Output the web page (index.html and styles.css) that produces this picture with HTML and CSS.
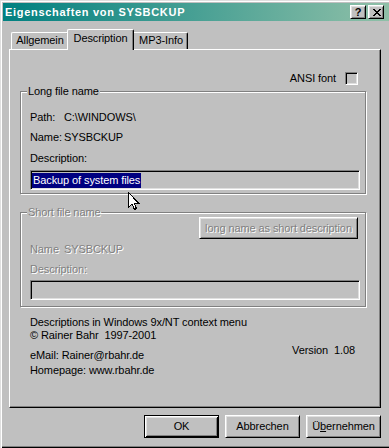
FILE: index.html
```html
<!DOCTYPE html>
<html>
<head>
<meta charset="utf-8">
<link rel="stylesheet" href="styles.css">
</head>
<body>
<div class="window">
  <div class="titlebar">
    <span class="title">Eigenschaften von SYSBCKUP</span>
    <div class="tb-buttons">
      <span class="tb-btn help">?</span>
      <span class="tb-btn close"><svg width="8" height="7" viewBox="0 0 8 7" shape-rendering="crispEdges"><path d="M0 0h2v1H0zM6 0h2v1H6zM1 1h2v1H1zM5 1h2v1H5zM2 2h4v1H2zM3 3h2v1H3zM2 4h4v1H2zM1 5h2v1H1zM5 5h2v1H5zM0 6h2v1H0zM6 6h2v1H6z" fill="#000"/></svg></span>
    </div>
  </div>
  <div class="client">
    <div class="tabs">
      <div class="tab tab-general">Allgemein</div>
      <div class="tab tab-desc">Description</div>
      <div class="tab tab-mp3">MP3-Info</div>
    </div>
    <div class="panel">
      <div class="ansi-row"><span>ANSI font</span><span class="checkbox"></span></div>
      <div class="group g-long">
        <span class="legend">Long file name</span>
        <div class="row"><span class="lbl">Path:</span><span>C:\WINDOWS\</span></div>
        <div class="row r2"><span class="lbl">Name:</span><span>SYSBCKUP</span></div>
        <div class="row r3">Description:</div>
        <div class="field f-long"><span class="sel">Backup of system files</span></div>
      </div>
      <div class="group g-short disabled">
        <span class="legend">Short file name</span>
        <div class="btn btn-long">long name as short description</div>
        <div class="row s2"><span class="lbl">Name</span><span>SYSBCKUP</span></div>
        <div class="row s3">Description:</div>
        <div class="field f-short"></div>
      </div>
      <div class="info">
        <div>Descriptions in Windows 9x/NT context menu</div>
        <div>© Rainer Bahr&nbsp; 1997-2001</div>
        <div class="info-row">
          <div class="contact">
            <div>eMail: Rainer@rbahr.de</div>
            <div>Homepage: www.rbahr.de</div>
          </div>
          <div class="version">Version&nbsp; 1.08</div>
        </div>
      </div>
    </div>
    <div class="buttons">
      <div class="btn btn-ok">OK</div>
      <div class="btn">Abbrechen</div>
      <div class="btn">Ü<u>b</u>ernehmen</div>
    </div>
  </div>
  <svg class="cursor" width="12" height="19" viewBox="0 0 12 19" shape-rendering="crispEdges"><path d="M0.5 0.5V15.5L4 12L6.5 17.5L8.5 16.5L6 11H10.5Z" fill="#fff" stroke="#000" stroke-width="1"/></svg>
</div>
</body>
</html>
```
FILE: styles.css
```css
* { box-sizing: border-box; }
html, body { margin: 0; padding: 0; }
body {
  background: #c0c0c0;
  font-family: "Liberation Sans", Arial, sans-serif;
  font-size: 11px;
  line-height: 13px;
  color: #000;
  letter-spacing: -0.1px;
}
.window {
  position: relative;
  width: 389px;
  height: 448px;
  padding: 3px 0 0 3px;
  background: #c0c0c0;
  box-shadow: inset 1px 1px #dfdfdf, inset 2px 2px #fff, inset 0 -1px #000, inset 0 -2px #808080;
  overflow: hidden;
}
.titlebar {
  height: 18px;
  display: flex;
  align-items: center;
  justify-content: space-between;
  background: linear-gradient(to right, #008080, #90c0a8);
}
.title {
  color: #fff;
  font-weight: bold;
  letter-spacing: 0.7px;
  padding-left: 2px;
}
.tb-buttons { display: flex; gap: 2px; margin-right: 5px; }
.tb-btn {
  width: 16px;
  height: 14px;
  display: flex;
  align-items: center;
  justify-content: center;
  background: #c0c0c0;
  border: 1px solid;
  border-color: #fff #000 #000 #fff;
  box-shadow: inset 1px 1px #dfdfdf, inset -1px -1px #808080;
}
.help { font-weight: bold; line-height: 11px; letter-spacing: 0; }
.close { padding-left: 1px; }
.close svg { display: block; }
.client { padding-left: 6px; }
.tabs {
  display: flex;
  align-items: flex-end;
  height: 20px;
  margin-top: 8px;
  padding-left: 2px;
}
.tab {
  position: relative;
  height: 17px;
  padding-top: 1px;
  text-align: center;
  background: #c0c0c0;
  border-top: 1px solid #fff;
  border-left: 1px solid #fff;
  border-right: 1px solid #000;
  border-radius: 2px 2px 0 0;
  box-shadow: inset -1px 0 #808080;
}
.tab-general { width: 58px; }
.tab-desc { width: 67px; height: 21px; margin: 0 -2px -1px; z-index: 2; padding-top: 2px; }
.tab-mp3 { width: 56px; padding-left: 2px; }
.panel {
  width: 372px;
  height: 359px;
  border: 1px solid;
  border-color: #fff #000 #000 #fff;
  box-shadow: inset -1px -1px #808080;
  display: flex;
  flex-direction: column;
}
.ansi-row {
  display: flex;
  justify-content: flex-end;
  align-items: center;
  gap: 9px;
  height: 13px;
  margin-top: 22px;
  padding-right: 22px;
}
.checkbox {
  width: 13px;
  height: 13px;
  border: 1px solid;
  border-color: #808080 #fff #fff #808080;
  box-shadow: inset 1px 1px #000, inset -1px -1px #dfdfdf;
  background: #c0c0c0;
}
.group {
  position: relative;
  margin-left: 10px;
  width: 346px;
  border: 1px solid #808080;
  box-shadow: inset 1px 1px #fff, 1px 1px #fff;
  padding-left: 9px;
  display: flex;
  flex-direction: column;
  align-items: flex-start;
}
.legend {
  position: absolute;
  top: -7px;
  left: 6px;
  padding: 0 1px;
  background: #c0c0c0;
}
.row { display: flex; }
.lbl { width: 34px; }
.g-long { margin-top: 6px; height: 103px; padding-top: 19px; }
.r2 { margin-top: 7px; }
.r3 { margin-top: 8px; }
.field {
  width: 330px;
  height: 20px;
  border: 1px solid;
  border-color: #808080 #fff #fff #808080;
  box-shadow: inset 1px 1px #000, inset -1px -1px #dfdfdf;
  background: #c0c0c0;
  display: flex;
  align-items: center;
  padding-left: 1px;
}
.f-long { margin-top: 5px; }
.sel {
  background: #000080;
  color: #fff;
  line-height: 15px;
  padding: 0 1px;
}
.g-short { margin-top: 18px; height: 95px; padding-top: 4px; }
.disabled { color: #808080; }
.disabled .legend, .disabled .row, .disabled .btn { text-shadow: 1px 1px 0 #fff; }
.btn {
  width: 75px;
  height: 23px;
  display: flex;
  align-items: center;
  justify-content: center;
  background: #c0c0c0;
  border: 1px solid;
  border-color: #fff #000 #000 #fff;
  box-shadow: inset 1px 1px #dfdfdf, inset -1px -1px #808080;
}
.btn-long {
  align-self: flex-end;
  margin-right: 7px;
  width: 159px;
  height: 22px;
}
.s2 { margin-top: 4px; }
.s3 { margin-top: 7px; }
.f-short { margin-top: 4px; }
.info { margin: 9px 25px 0 20px; }
.info-row {
  display: flex;
  justify-content: space-between;
  margin-top: 2px;
}
.contact { padding-top: 4px; line-height: 15px; }
.buttons {
  display: flex;
  justify-content: flex-end;
  gap: 6px;
  width: 372px;
  margin-top: 7px;
}
.btn-ok {
  border-color: #000;
  box-shadow: inset 1px 1px #fff, inset -1px -1px #000, inset 2px 2px #dfdfdf, inset -2px -2px #808080;
}
.cursor {
  position: absolute;
  left: 128px;
  top: 192px;
}
```
